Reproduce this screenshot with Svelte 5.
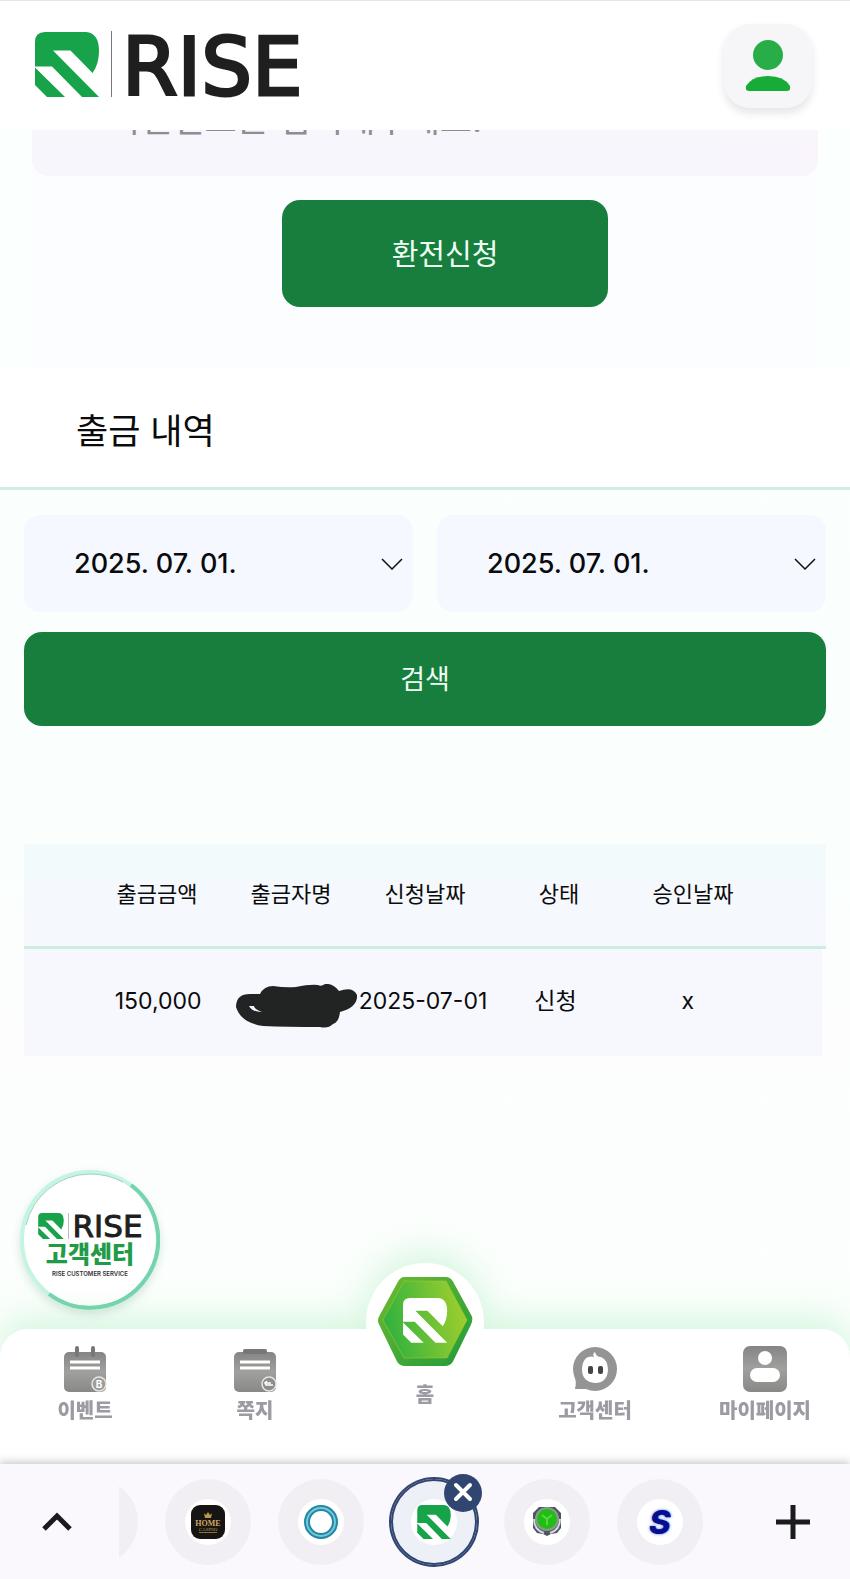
<script lang="ts">
  type Withdrawal = {
    amount: string;
    requested: string;
    status: string;
    approved: string;
  };

  const dates = ["2025. 07. 01."];
  const columns = ["출금금액", "출금자명", "신청날짜", "상태", "승인날짜"];
  const rows: Withdrawal[] = [
    { amount: "150,000", requested: "2025-07-01", status: "신청", approved: "x" },
  ];

  let from = $state(dates[0]);
  let to = $state(dates[0]);
</script>

{#snippet mark()}
  <svg class="mark" viewBox="0 0 64 65" aria-hidden="true">
    <path d="M10 0H51Q64 1 64 19Q64 32 57.600 41L35.500 18.500H18L64 65H47L17 34.500H0V10Q0 0 10 0Z" />
    <path d="M0 35.500L30 65H12L0 53Z" />
  </svg>
{/snippet}

{#snippet chevron()}
  <svg class="chevron" viewBox="0 0 22 12" aria-hidden="true">
    <path d="M1 1L11 11L21 1" fill="none" stroke="#111" stroke-width="1.500" />
  </svg>
{/snippet}

<div class="page">
  <header class="header">
    <a class="logo" href="#home">
      {@render mark()}
      <span class="rule"></span>
      <span class="word">RISE</span>
    </a>
    <button class="profile" aria-label="프로필">
      <svg viewBox="0 0 46 52" aria-hidden="true">
        <circle cx="23" cy="16" r="15" fill="#28ae49" />
        <path d="M4 52Q0 52 1 47Q7 37 23 37Q39 37 45 47Q46 52 42 52Z" fill="#17ac37" />
      </svg>
    </button>
  </header>

  <main class="main">
    <form class="request">
      <input class="password" type="password" placeholder="비밀번호는 입력해주세요." aria-label="비밀번호" />
      <button class="primary request-btn" type="button">환전신청</button>
    </form>

    <h1 class="title">출금 내역</h1>

    <form class="search">
      <div class="dates">
        <label class="date">
          <select bind:value={from} aria-label="시작일">
            {#each dates as date}
              <option>{date}</option>
            {/each}
          </select>
          {@render chevron()}
        </label>
        <label class="date">
          <select bind:value={to} aria-label="종료일">
            {#each dates as date}
              <option>{date}</option>
            {/each}
          </select>
          {@render chevron()}
        </label>
      </div>
      <button class="primary search-btn" type="button">검색</button>
    </form>

    <table class="history">
      <thead>
        <tr>
          {#each columns as column}
            <th>{column}</th>
          {/each}
        </tr>
      </thead>
      <tbody>
        {#each rows as row}
          <tr>
            <td>{row.amount}</td>
            <td class="name">
              <svg class="scribble" viewBox="0 0 121 44" aria-hidden="true">
                <path
                  fill="#222424"
                  fill-rule="evenodd"
                  d="M24 10Q28 2 37 2Q50 4 60 3Q74 0 82 1Q85 3 89 0Q97 -1 103 7Q117 2 121 11Q122 23 104 28Q103 38 97 40Q92 45 84 43Q50 43 27 42Q5 39 0 23Q0 10 14 10ZM13 22Q16 28 26 28Q18 25 18 22Z"
                />
              </svg>
            </td>
            <td>{row.requested}</td>
            <td>{row.status}</td>
            <td>{row.approved}</td>
          </tr>
        {/each}
      </tbody>
    </table>

    <a class="support" href="#support">
      <svg class="support-ring" viewBox="0 0 140 140" aria-hidden="true">
        <circle cx="70" cy="70" r="68" fill="#fff" stroke="#c3f5e2" stroke-width="4" />
        <path d="M6 55A66 66 0 0 1 70 4Q88 4 103 12" fill="none" stroke="#a5cdbf" stroke-width="1" />
        <path d="M111 15A68 68 0 0 1 29 124" fill="none" stroke="#75d3ae" stroke-width="4" />
      </svg>
      <span class="support-logo">
        {@render mark()}
        <span class="rule"></span>
        <span class="word">RISE</span>
      </span>
      <span class="support-name">고객센터</span>
      <span class="support-sub">RISE CUSTOMER SERVICE</span>
    </a>
  </main>

  <nav class="nav">
    <a class="item" href="#event">
      <svg class="icon" viewBox="0 0 44 46" aria-hidden="true">
        <defs>
          <linearGradient id="grey" x1="0" y1="0" x2="0" y2="1">
            <stop offset="0" stop-color="#858585" />
            <stop offset="0.5" stop-color="#a0a09e" />
            <stop offset="1" stop-color="#888887" />
          </linearGradient>
        </defs>
        <rect x="1" y="6" width="42" height="40" rx="5" fill="url(#grey)" />
        <path d="M14 2V9M30 2V9" stroke="#777" stroke-width="4" stroke-linecap="round" />
        <path d="M7 16H37M7 22H37" stroke="#fff" stroke-width="3" />
        <circle cx="36" cy="38" r="7" fill="#9c9c9b" stroke="#e6e6e4" stroke-width="1.500" />
        <text x="36" y="42" text-anchor="middle" font-size="10" font-weight="700" fill="#fff">B</text>
      </svg>
      <span>이벤트</span>
    </a>
    <a class="item" href="#notes">
      <svg class="icon" viewBox="0 0 44 46" aria-hidden="true">
        <rect x="1" y="6" width="42" height="40" rx="5" fill="url(#grey)" />
        <rect x="10" y="3" width="24" height="5" rx="2" fill="#777" />
        <path d="M7 16H37M7 22H37" stroke="#fff" stroke-width="3" />
        <circle cx="36" cy="38" r="7" fill="#8d8d8c" stroke="#e6e6e4" stroke-width="1.500" />
        <path d="M40 39H33L32 37H38M34 35L32 37" fill="none" stroke="#fff" stroke-width="1.500" />
      </svg>
      <span>쪽지</span>
    </a>
    <a class="item home" href="#home">
      <span class="home-badge">
        <svg class="hexagon" viewBox="0 0 96 92" aria-hidden="true">
          <defs>
            <linearGradient id="edge" x1="0" y1="0" x2="1" y2="1">
              <stop offset="0" stop-color="#6fba2f" />
              <stop offset="1" stop-color="#219c3a" />
            </linearGradient>
            <linearGradient id="face" x1="0" y1="0.5" x2="1" y2="0.3">
              <stop offset="0" stop-color="#2fb13f" />
              <stop offset="1" stop-color="#a3cf2d" />
            </linearGradient>
          </defs>
          <path d="M27 3H69Q72 3 74 6L93 41Q94 44 92 48L74 85Q72 88 68 88H28Q24 88 22 85L4 48Q2 44 4 41L23 6Q25 3 27 3Z" fill="url(#edge)" stroke="url(#edge)" stroke-width="4" />
          <path d="M27 5H69L90 44L70 82H27L6 44Z" fill="url(#face)" stroke="#a4cf36" stroke-opacity="0.500" />
          <g fill="#fff" transform="translate(26 22) scale(0.69)">
            <path d="M10 0H51Q64 1 64 19Q64 32 57.600 41L35.500 18.500H18L64 65H47L17 34.500H0V10Q0 0 10 0Z" />
            <path d="M0 35.500L30 65H12L0 53Z" />
          </g>
        </svg>
      </span>
      <span>홈</span>
    </a>
    <a class="item" href="#support">
      <svg class="icon" viewBox="0 0 44 46" aria-hidden="true">
        <circle cx="22" cy="23" r="22" fill="#949494" />
        <path d="M1 28Q4 36 2 43H20Z" fill="#949494" />
        <path d="M10 17Q13 9 21 11Q19 8 22 6Q23 11 28 11Q35 14 35 24Q34 37 22 37Q9 36 9 23Q9 20 10 17Z" fill="#fff" />
        <rect x="15" y="20" width="5" height="8" rx="2" fill="#444" />
        <rect x="25" y="20" width="5" height="8" rx="2" fill="#444" />
      </svg>
      <span>고객센터</span>
    </a>
    <a class="item" href="#mypage">
      <svg class="icon" viewBox="0 0 44 46" aria-hidden="true">
        <rect width="44" height="46" rx="7" fill="url(#grey)" />
        <circle cx="22" cy="12" r="7" fill="#fff" />
        <rect x="7" y="22" width="30" height="14" rx="7" fill="#fff" />
      </svg>
      <span>마이페이지</span>
    </a>
  </nav>

  <footer class="tabs">
    <button class="tool" aria-label="위로">
      <svg viewBox="0 0 34 34" aria-hidden="true">
        <path d="M4 24L17 11L30 24" fill="none" stroke="#1b1b1e" stroke-width="5" />
      </svg>
    </button>
    <div class="tab-list">
      <button class="tab" aria-label="이전 탭"></button>
      <button class="tab" aria-label="홈 카지노">
        <span class="favicon">
          <svg viewBox="0 0 34 34" aria-hidden="true">
            <rect width="34" height="34" rx="9" fill="#171514" />
            <path d="M13 8L15 10L17 7L19 10L21 8L20 13H14Z" fill="#bd9650" />
            <text class="serif" x="17" y="21" text-anchor="middle" font-size="8" font-weight="700" fill="#d0aa62">HOME</text>
            <text class="serif" x="17" y="26" text-anchor="middle" font-size="5" fill="#bd9650">CASINO</text>
            <path d="M8 27.500H26" stroke="#8c6e38" />
          </svg>
        </span>
      </button>
      <button class="tab" aria-label="탭">
        <span class="favicon">
          <svg viewBox="0 0 34 34" aria-hidden="true">
            <circle cx="17" cy="17" r="14" fill="#fff" stroke="#2587a5" stroke-width="6" />
            <circle cx="17" cy="17" r="14" fill="none" stroke="#71cbd7" stroke-width="2" />
          </svg>
        </span>
      </button>
      <div class="tab active">
        <span class="favicon">{@render mark()}</span>
        <button class="close" aria-label="탭 닫기">
          <svg viewBox="0 0 38 38" aria-hidden="true">
            <path d="M12 11L26 25M26 11L12 25" stroke="#fff" stroke-width="4" stroke-linecap="round" />
          </svg>
        </button>
      </div>
      <button class="tab" aria-label="탭">
        <span class="favicon">
          <svg viewBox="0 0 34 34" aria-hidden="true">
            <path d="M9 2H25L31 8V23L27 28L21 29L17 31L13 29L7 28L3 23V8Z" fill="#4d5560" />
            <path d="M4 14Q4 25 14 28M30 14Q30 25 20 28" fill="none" stroke="#d5d8dc" stroke-width="2" />
            <circle cx="17" cy="14" r="12" fill="#8c9a8d" />
            <circle cx="17" cy="14" r="10" fill="#20bd17" />
            <path d="M12 10L17 14L22 10M17 14V20" fill="none" stroke="#55d93c" stroke-width="2" />
          </svg>
        </span>
      </button>
      <button class="tab" aria-label="탭">
        <span class="favicon letter">S</span>
      </button>
    </div>
    <button class="tool" aria-label="새 탭">
      <svg viewBox="0 0 34 34" aria-hidden="true">
        <path d="M17 0V34M0 17H34" stroke="#1b1b1e" stroke-width="5" />
      </svg>
    </button>
  </footer>
</div>

<style>
  :global(body) {
    margin: 0;
    background: #fbfffd;
  }

  .page {
    display: flex;
    flex-direction: column;
    min-height: 100vh;
    font-family: Inter, "Noto Sans CJK KR", sans-serif;
    color: #0b0b0d;
    overflow: hidden;
  }

  .page * {
    box-sizing: border-box;
  }

  button,
  input,
  select {
    font: inherit;
    color: inherit;
    border: 0;
    padding: 0;
    background: none;
  }

  button {
    cursor: pointer;
  }

  a {
    color: inherit;
    text-decoration: none;
  }

  svg {
    display: block;
  }

  .mark {
    fill: #17a34a;
    flex: none;
  }

  /* header */
  .header {
    position: relative;
    z-index: 1;
    display: flex;
    align-items: flex-start;
    justify-content: space-between;
    height: 130px;
    padding: 23px 38px 0 35px;
    border-top: 1px solid #e6e6e6;
    background: #fff;
  }

  .logo {
    display: flex;
    align-items: center;
    height: 80px;
  }

  .logo .mark {
    width: 64px;
    height: 65px;
  }

  .logo .rule {
    width: 1px;
    height: 66px;
    margin: 0 10px 0 12px;
    background: #77777a;
  }

  .word {
    color: #1f1f1f;
    font-family: "DejaVu Sans", sans-serif;
  }

  .logo .word {
    padding-top: 8px;
    font-size: 80px;
    line-height: 80px;
    -webkit-text-stroke: 3px #1f1f1f;
  }

  .profile {
    display: grid;
    place-items: center;
    width: 88px;
    height: 84px;
    padding-bottom: 2px;
    border-radius: 26px;
    background: #f6f5f8;
    box-shadow: 0 5px 8px rgba(40, 30, 50, 0.12);
  }

  .profile svg {
    width: 46px;
    height: 52px;
  }

  /* content */
  .main {
    position: relative;
    flex: 1;
    background: linear-gradient(#fbfffe, #fafffd 60%, #fdfdfe 75%, #fbfffc);
  }

  .request {
    display: flex;
    flex-direction: column;
    align-items: center;
    gap: 24px;
    margin: -60px 32px 0;
    padding-bottom: 60px;
    background: #fcfdff;
  }

  .password {
    width: 100%;
    height: 106px;
    padding: 0 76px 8px;
    border-radius: 16px;
    background: linear-gradient(90deg, #f7f6fd 80%, #faf5fd);
    font-size: 35px;
  }

  .password::placeholder {
    color: #8e8d95;
    opacity: 1;
  }

  .primary {
    padding-bottom: 4px;
    border-radius: 18px;
    background: #177e3e;
    color: #f0fff4;
  }

  .request-btn {
    width: 326px;
    height: 107px;
    margin-left: 40px;
    font-size: 29px;
  }

  .title {
    margin: 0;
    padding: 38px 76px 29px;
    border-bottom: 3px solid #d0efe4;
    background: #fefffe;
    font-size: 35px;
    line-height: 53px;
    font-weight: 400;
  }

  .search {
    display: flex;
    flex-direction: column;
    gap: 20px;
    padding: 25px 24px 0;
  }

  .dates {
    display: grid;
    grid-template-columns: 1fr 1fr;
    gap: 24px;
  }

  .date {
    display: grid;
    align-items: center;
    border-radius: 16px;
    background: #f5f8ff;
  }

  .date select,
  .chevron {
    grid-area: 1 / 1;
  }

  .date select {
    width: 100%;
    height: 97px;
    padding: 0 50px;
    appearance: none;
    font-size: 27px;
    font-weight: 500;
  }

  .chevron {
    justify-self: end;
    width: 22px;
    height: 12px;
    margin-right: 10px;
    pointer-events: none;
  }

  .search-btn {
    height: 94px;
    font-size: 27px;
  }

  .history {
    display: block;
    margin: 118px 24px 0;
    font-size: 22px;
  }

  .history thead,
  .history tbody {
    display: block;
  }

  .history tr {
    display: grid;
    grid-template-columns: repeat(5, 1fr);
    align-items: center;
    padding: 0 66px;
  }

  .history thead tr {
    height: 105px;
    padding-bottom: 2px;
    border-bottom: 3px solid #cdeedd;
    background: linear-gradient(#f3fafb 35%, #f5f8fc 36%);
  }

  .history tbody tr {
    height: 107px;
    margin-right: 4px;
    padding: 0 68px 4px;
    background: #f7f8fd;
    font-size: 23px;
  }

  .history th,
  .history td {
    padding: 0;
    font-weight: 400;
    line-height: 32px;
    text-align: center;
    white-space: nowrap;
  }

  .history .name {
    display: flex;
    justify-content: flex-end;
    padding-top: 10px;
  }

  .scribble {
    flex: none;
    width: 121px;
    height: 44px;
  }

  /* floating customer service button */
  .support {
    position: absolute;
    left: 20px;
    bottom: 19px;
    display: flex;
    flex-direction: column;
    align-items: center;
    width: 140px;
    height: 140px;
    padding-top: 42px;
    border-radius: 50%;
    box-shadow: 0 4px 10px rgba(60, 130, 100, 0.2);
  }

  .support-ring {
    position: absolute;
    inset: 0;
    width: 140px;
    height: 140px;
  }

  .support-logo,
  .support-name,
  .support-sub {
    position: relative;
  }

  .support-logo {
    display: flex;
    align-items: center;
    height: 28px;
  }

  .support-logo .mark {
    width: 26px;
    height: 26px;
  }

  .support-logo .rule {
    width: 1px;
    height: 26px;
    margin: 0 4px;
    background: #bbb;
  }

  .support-logo .word {
    padding-top: 0;
    font-size: 31px;
    line-height: 28px;
    -webkit-text-stroke: 1px #1f1f1f;
  }

  .support-name {
    color: #219b48;
    font-size: 24px;
    line-height: 30px;
    font-weight: 900;
  }

  .support-sub {
    color: #333;
    font-size: 6px;
    line-height: 8px;
    font-weight: 600;
  }

  /* bottom navigation */
  .nav {
    position: relative;
    display: grid;
    grid-template-columns: repeat(5, 1fr);
    height: 135px;
    border-radius: 28px 28px 0 0;
    background: #fefffe;
    filter: drop-shadow(0 -10px 18px rgba(130, 225, 160, 0.32));
  }

  .item {
    display: flex;
    flex-direction: column;
    align-items: center;
    gap: 6px;
    padding-top: 17px;
    color: #9b9ba3;
    font-size: 20px;
    line-height: 26px;
    font-weight: 900;
  }

  .icon {
    width: 44px;
    height: 46px;
  }

  .home {
    gap: 1px;
    margin-top: -66px;
    padding-top: 0;
  }

  .home-badge {
    display: grid;
    place-items: center;
    width: 118px;
    height: 118px;
    border-radius: 50%;
    background: #fefffe;
  }

  .hexagon {
    width: 96px;
    height: 92px;
  }

  /* browser tabs */
  .tabs {
    position: relative;
    display: flex;
    align-items: center;
    justify-content: space-between;
    height: 115px;
    padding: 0 40px;
    background: #faf8fc;
    box-shadow: 0 -2px 8px rgba(40, 30, 40, 0.25);
  }

  .tool svg {
    width: 34px;
    height: 34px;
  }

  .tab-list {
    display: flex;
    justify-content: flex-end;
    gap: 27px;
    width: 584px;
    margin-right: 28px;
    padding: 24px 0;
    overflow: hidden;
  }

  .tab {
    position: relative;
    display: grid;
    flex: none;
    place-items: center;
    width: 86px;
    height: 86px;
    border-radius: 50%;
    background: #f1eff3;
  }

  .active {
    background: #eef0f7;
    box-shadow: 0 0 0 2px #304570, inset 0 0 0 2px #304570;
  }

  .favicon {
    display: grid;
    place-items: center;
    width: 46px;
    height: 46px;
    border-radius: 50%;
    background: #fff;
  }

  .favicon svg {
    width: 34px;
    height: 34px;
  }

  .serif {
    font-family: "Liberation Serif", serif;
  }

  .letter {
    color: #06108f;
    font-size: 33px;
    line-height: 46px;
    font-style: italic;
    font-weight: 800;
    text-shadow: 0 0 3px #4b6df0;
  }

  .close {
    position: absolute;
    top: -5px;
    right: -5px;
    width: 38px;
    height: 38px;
    border-radius: 50%;
    background: #304570;
  }
</style>
